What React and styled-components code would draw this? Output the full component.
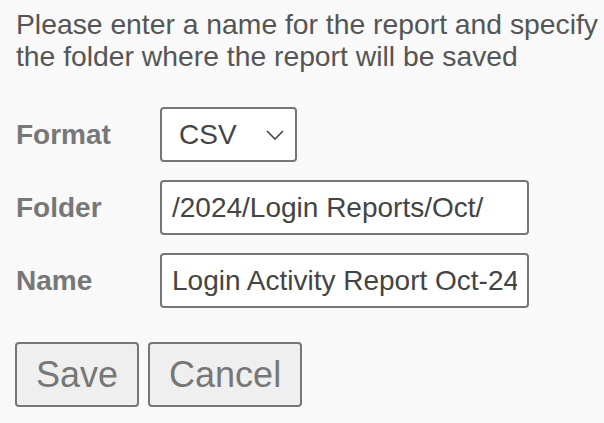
import React from "react";
import styled, { createGlobalStyle } from "styled-components";

const GlobalStyle = createGlobalStyle`
  body {
    margin: 0;
    background: #f9f9f9;
    font-family: "Liberation Sans", Arial, sans-serif;
  }
`;

const Page = styled.div`
  padding: 8px 0 8px 15px;
  width: 604px;
  box-sizing: border-box;
`;

const Intro = styled.p`
  margin: 0 0 35px 1px;
  font-size: 28.3px;
  line-height: 32px;
  color: #555;
`;

const Form = styled.div`
  display: grid;
  grid-template-columns: 145px auto;
  row-gap: 18px;
  align-items: center;
  justify-items: start;
`;

const Label = styled.label`
  margin-left: 1px;
  font-size: 28px;
  font-weight: bold;
  color: #777;
`;

const Field = styled.input`
  box-sizing: border-box;
  width: 369px;
  height: 55px;
  padding: 0 10px;
  border: 2px solid #767676;
  border-radius: 4px;
  background: #fff;
  font-family: inherit;
  font-size: 28px;
  color: #444;
  outline: none;
`;

const SelectBox = styled.div`
  box-sizing: border-box;
  width: 137px;
  height: 55px;
  padding: 0 11px 0 17px;
  border: 2px solid #767676;
  border-radius: 4px;
  background: #fff;
  display: flex;
  align-items: center;
  justify-content: space-between;
  font-size: 28px;
  color: #444;
`;

const Buttons = styled.div`
  display: flex;
  gap: 9px;
  margin-top: 34px;
`;

const Button = styled.button`
  box-sizing: border-box;
  height: 65px;
  padding: 0 ${(p) => p.$pad}px;
  border: 2px solid #767676;
  border-radius: 4px;
  background: #efefef;
  font-family: inherit;
  font-size: 36px;
  color: #777;
`;

export default function App() {
  return (
    <Page>
      <GlobalStyle />
      <Intro>
        Please enter a name for the report and specify the folder where the
        report will be saved
      </Intro>
      <Form>
        <Label>Format</Label>
        <SelectBox>
          CSV
          <svg width="18" height="10" viewBox="0 0 18 10">
            <path d="M1 1l8 8 8-8" fill="none" stroke="#444" strokeWidth="1.6" />
          </svg>
        </SelectBox>
        <Label>Folder</Label>
        <Field defaultValue="/2024/Login Reports/Oct/" />
        <Label>Name</Label>
        <Field defaultValue="Login Activity Report Oct-24" />
      </Form>
      <Buttons>
        <Button $pad={19}>Save</Button>
        <Button $pad={19}>Cancel</Button>
      </Buttons>
    </Page>
  );
}
